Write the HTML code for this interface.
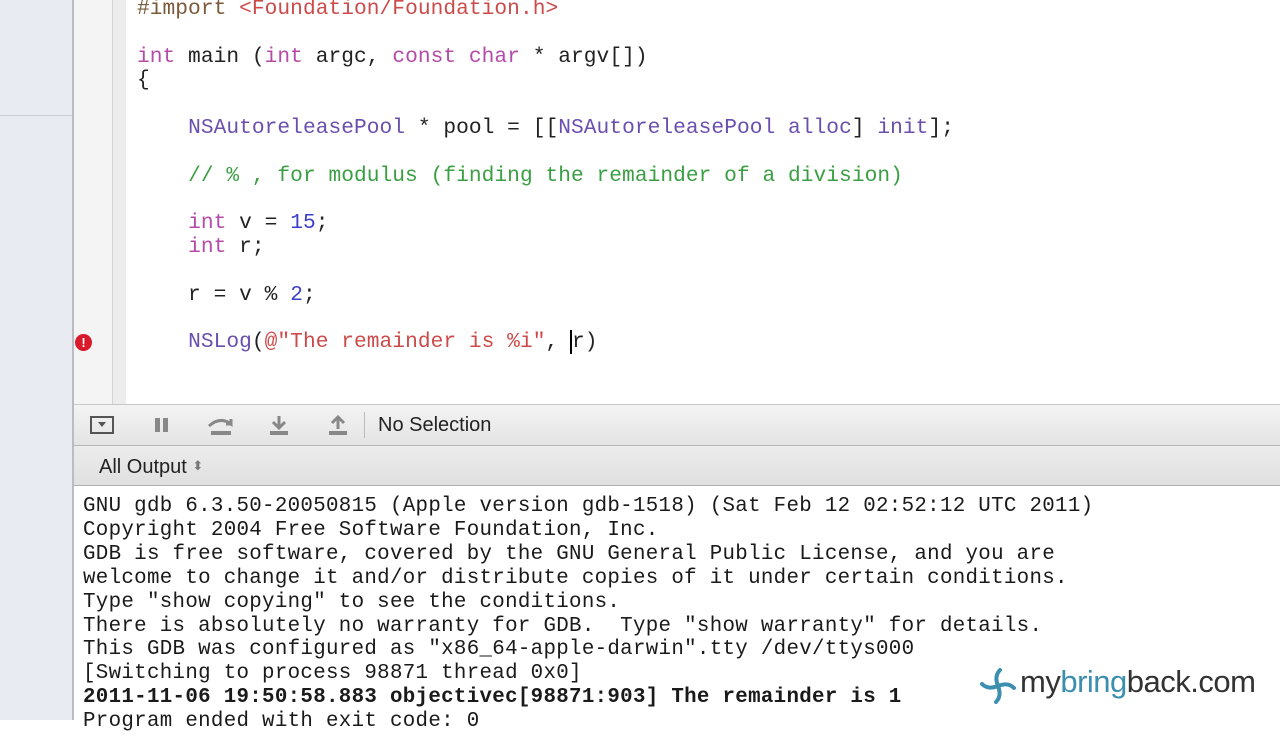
<!DOCTYPE html>
<html><head><meta charset="utf-8"><style>
body{margin:0;width:1280px;height:720px;overflow:hidden;background:#fff;position:relative;font-family:"Liberation Mono",monospace}
.abs{position:absolute}
.code{position:absolute;left:137px;top:-2px;font-size:21.2px;line-height:23.8px;white-space:pre;color:#222;letter-spacing:0.05px}
.k{color:#b64aa8}.s{color:#cc4b4a}.c{color:#3a9f43}.t{color:#6a4fae}.n{color:#3a3fc8}.p{color:#7a5a3a}
.con{position:absolute;left:83px;top:495px;font-size:20.8px;line-height:23.9px;white-space:pre;color:#1a1a1a;letter-spacing:0.31px}
.sans{font-family:"Liberation Sans",sans-serif}
</style></head><body>
<div class="abs" style="left:0;top:0;width:72px;height:720px;background:#e8ecf2"></div>
<div class="abs" style="left:0;top:115px;width:72px;height:1px;background:#c9ccd2"></div>
<div class="abs" style="left:72px;top:0;width:2px;height:720px;background:#b9bcc0"></div>
<div class="abs" style="left:74px;top:0;width:38px;height:405px;background:#f4f4f4"></div>
<div class="abs" style="left:112px;top:0;width:13px;height:405px;background:#ececec;border-left:1px solid #d4d4d4"></div>
<div class="code"><span class="p">#import</span> <span class="s">&lt;Foundation/Foundation.h&gt;</span>

<span class="k">int</span> main (<span class="k">int</span> argc, <span class="k">const char</span> * argv[])
{

    <span class="t">NSAutoreleasePool</span> * pool = [[<span class="t">NSAutoreleasePool</span> <span class="t">alloc</span>] <span class="t">init</span>];

    <span class="c">// % , for modulus (finding the remainder of a division)</span>

    <span class="k">int</span> v = <span class="n">15</span>;
    <span class="k">int</span> r;

    r = v % <span class="n">2</span>;

    <span class="t">NSLog</span>(<span class="s">@"The remainder is %i"</span>, <span style="border-left:2px solid #000;margin-left:-1px">r</span>)</div>
<div class="abs" style="left:75px;top:334px;width:17px;height:17px;border-radius:50%;background:#d81a2a;color:#fff;font:bold 13px 'Liberation Sans',sans-serif;text-align:center;line-height:17px">!</div>
<div class="abs" style="left:74px;top:404px;width:1206px;height:40px;background:linear-gradient(#f3f3f3,#e4e4e4);border-top:1px solid #c8c8c8;border-bottom:1px solid #b8b8b8"></div>
<div class="abs" style="left:90px;top:416px;width:24px;height:18px;border:2px solid #555;box-sizing:border-box"></div>
<div class="abs" style="left:98px;top:422px;width:0;height:0;border-left:4px solid transparent;border-right:4px solid transparent;border-top:5px solid #555"></div>
<div class="abs" style="left:155px;top:418px;width:5px;height:14px;background:#888"></div>
<div class="abs" style="left:163px;top:418px;width:5px;height:14px;background:#888"></div>
<svg class="abs" style="left:205px;top:414px" width="30" height="24"><path d="M4 12 Q15 2 26 10 L26 5 M26 10 L21 10" stroke="#888" stroke-width="3" fill="none"/><rect x="6" y="17" width="20" height="4" fill="#888"/></svg>
<svg class="abs" style="left:268px;top:414px" width="22" height="24"><path d="M11 2 V13 M5 8 L11 14 L17 8" stroke="#888" stroke-width="3" fill="none"/><rect x="2" y="17" width="18" height="4" fill="#888"/></svg>
<svg class="abs" style="left:327px;top:414px" width="22" height="24"><path d="M11 15 V4 M5 9 L11 3 L17 9" stroke="#888" stroke-width="3" fill="none"/><rect x="2" y="17" width="18" height="4" fill="#888"/></svg>
<div class="abs" style="left:364px;top:412px;width:1px;height:26px;background:#bbb"></div>
<div class="abs sans" style="left:378px;top:414px;font-size:20px;color:#222">No Selection</div>
<div class="abs" style="left:74px;top:446px;width:1206px;height:39px;background:linear-gradient(#ececec,#e0e0e0);border-bottom:1px solid #b0b0b0"></div>
<div class="abs sans" style="left:99px;top:456px;font-size:20px;color:#222">All Output <span style="font-size:13px;color:#777;vertical-align:3px">⬍</span></div>
<div class="con">GNU gdb 6.3.50-20050815 (Apple version gdb-1518) (Sat Feb 12 02:52:12 UTC 2011)
Copyright 2004 Free Software Foundation, Inc.
GDB is free software, covered by the GNU General Public License, and you are
welcome to change it and/or distribute copies of it under certain conditions.
Type "show copying" to see the conditions.
There is absolutely no warranty for GDB.  Type "show warranty" for details.
This GDB was configured as "x86_64-apple-darwin".tty /dev/ttys000
[Switching to process 98871 thread 0x0]
<b>2011-11-06 19:50:58.883 objectivec[98871:903] The remainder is 1</b>
Program ended with exit code: 0</div>
<div class="abs" style="left:975px;top:662px;width:300px;height:50px;background:#fff"></div>
<svg class="abs" style="left:980px;top:668px" width="36" height="36"><g stroke="#3d8fb0" stroke-width="4" fill="none" stroke-linecap="round"><path d="M18 18 Q14 8 20 2"/><path d="M18 18 Q28 14 34 20"/><path d="M18 18 Q22 28 16 34"/><path d="M18 18 Q8 22 2 16"/></g></svg>
<div class="abs sans" style="left:1020px;top:664px;font-size:31px;letter-spacing:-0.5px;color:#333">my<span style="color:#3d8fb0">bring</span>back.com</div>
</body></html>
